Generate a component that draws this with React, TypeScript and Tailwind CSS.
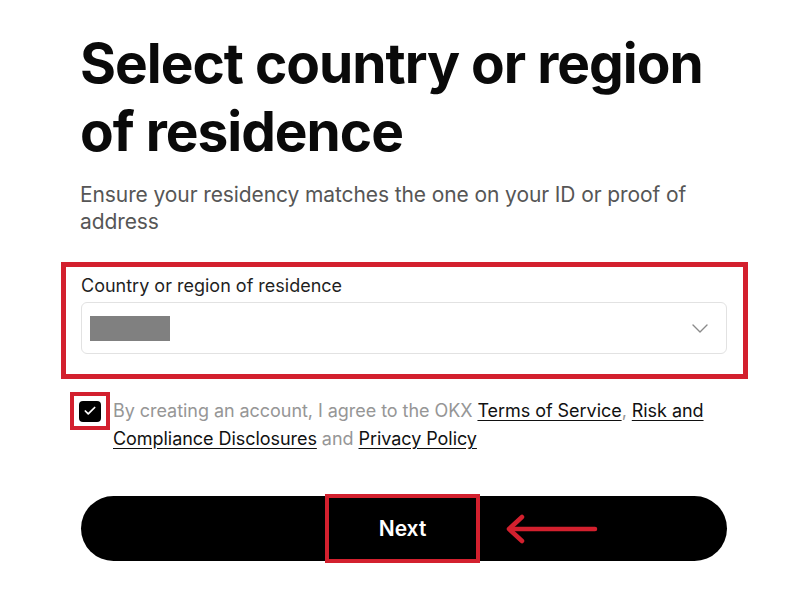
import { Check } from "lucide-react";

function ChevronDown() {
  return (
    <svg width="16" height="9" viewBox="0 0 16 9" fill="none">
      <polyline points="1,1 8,8 15,1" stroke="#8a8a8a" strokeWidth="1.4" strokeLinecap="round" strokeLinejoin="round" />
    </svg>
  );
}

function RedArrow() {
  return (
    <svg width="92" height="30" viewBox="0 0 92 30" fill="none">
      <line x1="4" y1="15" x2="89" y2="15" stroke="#d3202e" strokeWidth="4.5" strokeLinecap="round" />
      <polyline points="16,3 3,15 16,27" stroke="#d3202e" strokeWidth="4.5" strokeLinecap="round" strokeLinejoin="round" />
    </svg>
  );
}

export default function App() {
  return (
    <div className="h-[613px] w-[808px] overflow-hidden bg-white font-['Inter',sans-serif]">
      <div className="w-[727px] pl-[80px] pt-[29px]">
        <h1 className="text-[55px] font-bold leading-[68px] tracking-[-1px] text-[#0a0a0a]">
          Select country or region of residence
        </h1>
        <p className="mt-[16px] text-[21px] leading-[27px] tracking-[-0.1px] text-[#565656]">
          Ensure your residency matches the one on your ID or proof of address
        </p>
      </div>

      <div className="ml-[61px] mt-[27px] w-[687px] border-[5px] border-[#d3202e] pb-[20px] pl-[15px] pr-[16px] pt-[7px]">
        <label className="block text-[18px] leading-[24px] text-[#1f1f1f]">Country or region of residence</label>
        <div className="mt-[4px] flex h-[52px] items-center justify-between rounded-[6px] border border-[#e2e2e2] pl-[8px] pr-[18px]">
          <div className="h-[25px] w-[80px] bg-[#808080]" />
          <ChevronDown />
        </div>
      </div>

      <div className="ml-[70px] mt-[13px] flex w-[660px] items-start">
        <div className="flex h-[38px] w-[40px] flex-shrink-0 items-center justify-center border-[4px] border-[#d3202e]">
          <div className="grid h-[21px] w-[22px] place-items-center rounded-[4px] bg-black">
            <Check className="h-[14px] w-[14px] text-white" strokeWidth={3} />
          </div>
        </div>
        <p className="ml-[3px] mt-[5px] text-[18px] leading-[28px] tracking-[-0.05px] text-[#969696]">
          By creating an account, I agree to the OKX{" "}
          <a className="text-[#111] underline underline-offset-[3px]">Terms of Service</a>,{" "}
          <a className="text-[#111] underline underline-offset-[3px]">Risk and Compliance Disclosures</a> and{" "}
          <a className="text-[#111] underline underline-offset-[3px]">Privacy Policy</a>
        </p>
      </div>

      <div className="ml-[81px] mt-[43px] w-[646px]">
        <button className="relative flex h-[65px] w-full items-center justify-center rounded-full bg-black">
          <span className="-my-[2px] ml-[-3px] flex h-[69px] w-[155px] items-center justify-center border-[4px] border-[#d3202e] text-[21px] font-semibold text-white">
            Next
          </span>
          <span className="absolute left-[425px] top-[18px]">
            <RedArrow />
          </span>
        </button>
      </div>
    </div>
  );
}
